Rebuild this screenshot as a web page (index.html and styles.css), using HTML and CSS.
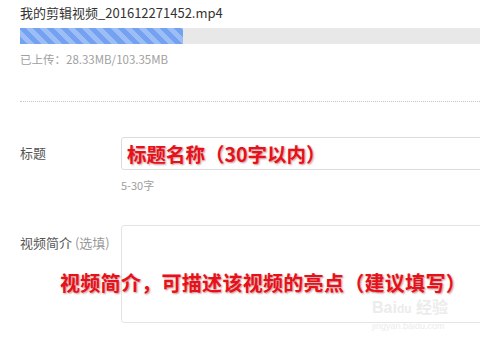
FILE: index.html
```html
<!DOCTYPE html>
<html lang="zh">
<head>
<meta charset="utf-8">
<link rel="stylesheet" href="styles.css">
</head>
<body>
<div class="page">
  <div class="filename">我的剪辑视频_201612271452.mp4</div>
  <div class="progress"><div class="progress-fill" style="width:163px"></div></div>
  <div class="uploaded">已上传：28.33MB/103.35MB</div>
  <div class="divider"></div>

  <div class="row row-title">
    <div class="label">标题</div>
    <div class="field">
      <div class="input"><span class="note">标题名称（30字以内）</span></div>
      <div class="hint">5-30字</div>
    </div>
  </div>

  <div class="row row-desc">
    <div class="label">视频简介 <span class="opt">(选填)</span></div>
    <div class="field">
      <div class="textarea"></div>
    </div>
  </div>

  <div class="note note-desc">视频简介，可描述该视频的亮点（建议填写）</div>
  <div class="watermark"><span class="wm-logo">Bai<b>du</b> 经验</span><span class="wm-url">jingyan.baidu.com</span></div>
</div>
</body>
</html>
```

FILE: styles.css
```css
* { box-sizing: border-box; }
html, body { margin: 0; padding: 0; background: #fff; }
body {
  font-family: "Noto Sans CJK SC", "Liberation Sans", sans-serif;
  color: #333;
}
.page {
  position: relative;
  width: 480px;
  height: 342px;
  overflow: hidden;
  padding: 4px 0 0 20px;
}
.filename {
  font-size: 13px;
  line-height: 17px;
  color: #333;
}
.progress {
  margin-top: 7px;
  height: 16px;
  width: 600px;
  background: #e8e8e8;
}
.progress-fill {
  height: 100%;
  background: repeating-linear-gradient(45deg, #74a2f1 0 5px, #9cbdf6 5px 10px);
}
.uploaded {
  margin-top: 8px;
  font-size: 11.5px;
  line-height: 14px;
  color: #a0a0a0;
}
.divider {
  margin-top: 35px;
  width: 600px;
  border-top: 1px dotted #c8c8c8;
}
.row {
  display: flex;
}
.label {
  width: 101px;
  flex: none;
  font-size: 13px;
  color: #555;
}
.opt { color: #999; }
.row-title {
  margin-top: 35px;
}
.row-title .label {
  height: 33px;
  line-height: 31px;
}
.field {
  flex: none;
}
.input {
  width: 420px;
  height: 33px;
  border: 1px solid #dcdcdc;
  border-radius: 3px;
  padding-left: 5px;
  display: flex;
  align-items: center;
}
.note {
  font-size: 19.5px;
  font-weight: bold;
  color: #e8101a;
  text-shadow: 1px 1px 2px rgba(120, 0, 0, 0.45);
  white-space: nowrap;
}
.hint {
  margin-top: 8px;
  font-size: 11px;
  line-height: 14px;
  color: #a0a0a0;
}
.row-desc {
  margin-top: 33px;
}
.row-desc .label {
  padding-top: 8px;
  line-height: 20px;
}
.textarea {
  width: 420px;
  height: 98px;
  border: 1px solid #e4e4e4;
  border-radius: 3px;
}
.note-desc {
  position: absolute;
  left: 60px;
  top: 270px;
  line-height: 26px;
  font-size: 20px;
  letter-spacing: 0.3px;
}
.watermark {
  position: absolute;
  left: 372px;
  top: 300px;
  display: flex;
  flex-direction: column;
  color: #ececec;
  font-family: "Liberation Sans", "Noto Sans CJK SC", sans-serif;
}
.wm-logo { font-size: 16px; line-height: 15px; font-weight: bold; }
.wm-logo b { font-size: 12px; }
.wm-url { font-size: 9px; line-height: 10px; margin-top: 4px; }
```
